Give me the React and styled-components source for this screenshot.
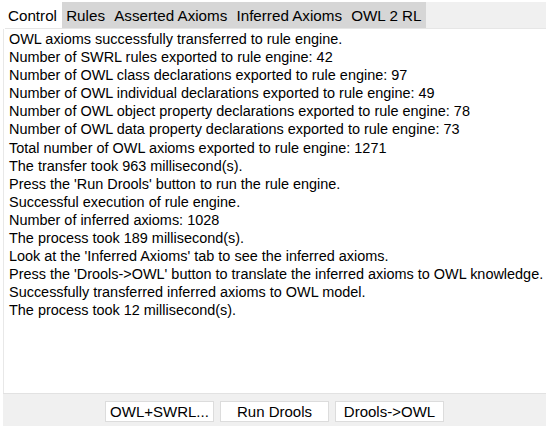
import React from "react";
import styled, { createGlobalStyle } from "styled-components";

const lines = [
  "OWL axioms successfully transferred to rule engine.",
  "Number of SWRL rules exported to rule engine: 42",
  "Number of OWL class declarations exported to rule engine: 97",
  "Number of OWL individual declarations exported to rule engine: 49",
  "Number of OWL object property declarations exported to rule engine: 78",
  "Number of OWL data property declarations exported to rule engine: 73",
  "Total number of OWL axioms exported to rule engine: 1271",
  "The transfer took 963 millisecond(s).",
  "Press the 'Run Drools' button to run the rule engine.",
  "Successful execution of rule engine.",
  "Number of inferred axioms: 1028",
  "The process took 189 millisecond(s).",
  "Look at the 'Inferred Axioms' tab to see the inferred axioms.",
  "Press the 'Drools->OWL' button to translate the inferred axioms to OWL knowledge.",
  "Successfully transferred inferred axioms to OWL model.",
  "The process took 12 millisecond(s).",
];

const tabs = ["Control", "Rules", "Asserted Axioms", "Inferred Axioms", "OWL 2 RL"];
const buttons = ["OWL+SWRL...", "Run Drools", "Drools->OWL"];

function App() {
  return (
    <>
      <GlobalStyle />
      <Wrap>
        <TabBar>
          <TabStrip>
            {tabs.map((t, i) => (
              <Tab key={t} active={i === 0}>
                {t}
              </Tab>
            ))}
          </TabStrip>
        </TabBar>
        <Console>
          {lines.map((l, i) => (
            <Line key={i}>{l}</Line>
          ))}
        </Console>
        <Footer>
          {buttons.map((b) => (
            <Button key={b}>{b}</Button>
          ))}
        </Footer>
      </Wrap>
    </>
  );
}

const GlobalStyle = createGlobalStyle`
  html, body {
    margin: 0;
    padding: 0;
    background: #ffffff;
  }
`;

const Wrap = styled.div`
  width: 550px;
  height: 426px;
  display: flex;
  flex-direction: column;
  font-family: "Liberation Sans", Arial, sans-serif;
  color: #000;
  background: #ffffff;
`;

const TabBar = styled.div`
  display: flex;
  height: 26px;
  margin: 2px 4px 0 5px;
  background: #f0f0f0;
  border-bottom: 1px solid #e6e6e6;
`;

const TabStrip = styled.div`
  display: flex;
  background: #d6d6d6;
`;

const Tab = styled.div`
  display: flex;
  align-items: center;
  padding: 0 4.6px;
  font-size: 15.2px;
  background: ${(p) => (p.active ? "#ffffff" : "transparent")};
  &:first-child {
    padding-left: 3px;
  }
`;

const Console = styled.div`
  flex: 1;
  display: flex;
  flex-direction: column;
  padding: 1px 0 0 5px;
  margin-left: 3px;
  border-left: 1px solid #e8e8e8;
  font-size: 14.45px;
`;

const Line = styled.div`
  line-height: 18.1px;
  white-space: nowrap;
`;

const Footer = styled.div`
  display: flex;
  justify-content: center;
  gap: 6px;
  height: 33px;
  padding-top: 7px;
  box-sizing: border-box;
  margin: 0 4px 0 3px;
  background: #f0f0f0;
  border-top: 1px solid #e2e2e2;
`;

const Button = styled.div`
  width: 109px;
  height: 21px;
  display: flex;
  align-items: center;
  justify-content: center;
  box-sizing: border-box;
  background: #ffffff;
  border: 1px solid #dcdcdc;
  font-size: 15px;
`;

export default App;
